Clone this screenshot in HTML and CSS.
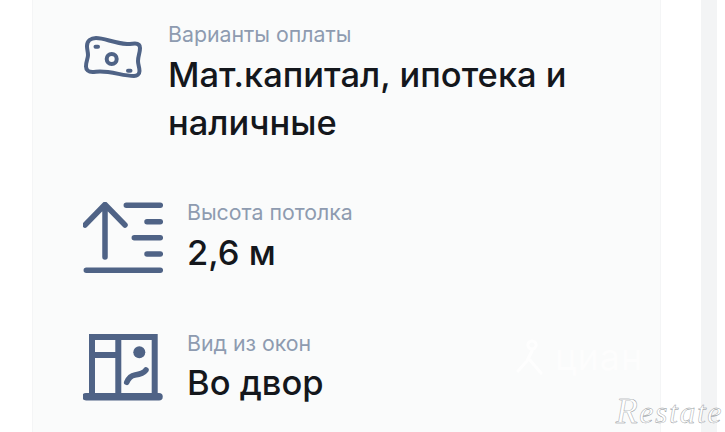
FILE: index.html
```html
<!DOCTYPE html>
<html lang="ru">
<head>
<meta charset="utf-8">
<title>Параметры</title>
<link rel="stylesheet" href="styles.css">
</head>
<body>
<div class="page">
  <section class="card">
    <div class="row row-pay">
      <svg class="icon icon-pay" viewBox="0 0 60 46" fill="none" stroke="#4f6386" stroke-width="4" stroke-linecap="round" stroke-linejoin="round">
        <path d="M4 11C4 6 8 3 13 3C22 3 30 8 44 9C47 9.200 50 8.500 52 8.500C55 8.500 57 10 57 13C57 18 55 21 55 26C55 30 56.500 32 56.500 36C56.500 39.500 54 41 51 41C40 41 30 36.500 17 36.500C14 36.500 12 37 9.500 37C5.500 37 3 35 3 31.500C3 26 5 24 5 20C5 16.500 4 15 4 11Z"/>
        <circle cx="28.700" cy="24" r="5"/>
        <path d="M12.500 11.700H15M45 35.700H47.500"/>
      </svg>
      <div class="text">
        <div class="label">Варианты оплаты</div>
        <div class="value">Мат.капитал, ипотека и наличные</div>
      </div>
    </div>
    <div class="row row-height">
      <svg class="icon icon-wide" viewBox="0 0 80 72" fill="none" stroke="#4f6386" stroke-width="5.500" stroke-linecap="round" stroke-linejoin="round">
        <path d="M2 23L22 2.500L42 23M22 2.500V55"/>
        <path d="M43.300 3.300H77.300M64 19.700H77.300M51.300 35.700H77.300M64 52H77.300M3.300 68.300H77.300"/>
      </svg>
      <div class="text">
        <div class="label">Высота потолка</div>
        <div class="value">2,6 м</div>
      </div>
    </div>
    <div class="row row-view">
      <svg class="icon icon-wide icon-window" viewBox="0 0 80 72" fill="none" stroke="#4f6386" stroke-linecap="round" stroke-linejoin="round">
        <path d="M9 62V3H71.700V62M35.300 3V62M9 21H35.300" stroke-width="6" stroke-linecap="butt" stroke-linejoin="miter"/>
        <path d="M3 62.700H76" stroke-width="7.500"/>
        <circle cx="56.300" cy="18.300" r="6" fill="#4f6386" stroke="none"/>
        <path d="M43.700 48.300C46 43 49 41.500 52 41C56 40.500 60 40 63 36" stroke-width="5.500"/>
      </svg>
      <div class="text">
        <div class="label">Вид из окон</div>
        <div class="value">Во двор</div>
      </div>
    </div>
    <div class="ghost">
      <svg class="ghost-logo" viewBox="0 0 30 40" fill="none" stroke="#fefefe" stroke-width="3" stroke-linecap="round">
        <circle cx="17" cy="6" r="4"/>
        <path d="M17 12L12 22L3 32M14 20L26 34"/>
      </svg>
      <span>циан</span>
    </div>
  </section>
  <aside class="side"></aside>
  <div class="mark"><span class="mark-r">R</span>estate</div>
</div>
</body>
</html>
```

FILE: styles.css
```css
html, body {
  margin: 0;
  height: 100%;
  background: #fff;
  overflow: hidden;
}
.page {
  width: 725px;
  height: 432px;
  display: flex;
  overflow: hidden;
  position: relative;
  font-family: Inter, "Noto Sans", sans-serif;
}
.card {
  box-sizing: border-box;
  width: 629px;
  height: 432px;
  margin-left: 32px;
  padding: 21px 0 0 50px;
  background: #fafbfb;
  border: solid #f4f5f6;
  border-width: 0 1px 0 1px;
  position: relative;
  flex: none;
}
.row {
  display: flex;
  align-items: flex-start;
}
.row-height {
  margin-top: 52px;
}
.row-view {
  margin-top: 53px;
}
.icon {
  flex: none;
  display: block;
}
.icon-pay {
  width: 60px;
  height: 46px;
  margin: 14px 25px 0 0;
}
.icon-wide {
  width: 80px;
  height: 72px;
  margin: 3px 24px 0 0;
}
.row-view .icon-window {
  margin-top: 4px;
}
.label {
  font-size: 21.300px;
  line-height: 26px;
  color: #8e9bb0;
}
.value {
  font-size: 34.500px;
  font-weight: 500;
  line-height: 48px;
  color: #14171c;
  margin-top: 4px;
  width: 430px;
}
.row-view .value {
  margin-top: 3px;
}
.ghost {
  position: absolute;
  left: 482px;
  top: 335px;
  display: flex;
  align-items: flex-end;
  gap: 10px;
  font-size: 36px;
  line-height: 44px;
  color: #fdfdfd;
  letter-spacing: 1px;
}
.ghost-logo {
  width: 30px;
  height: 40px;
  display: block;
}
.side {
  width: 16px;
  height: 432px;
  margin-left: 40px;
  background: #f3f4f5;
  flex: none;
}
.mark {
  position: absolute;
  right: 2px;
  top: 393px;
  font-family: "Liberation Serif", serif;
  font-style: italic;
  font-size: 32px;
  line-height: 38px;
  letter-spacing: 1.500px;
  color: #fff;
  -webkit-text-stroke: 0.4px #8a8f94;
}
.mark-r {
  font-size: 36px;
  line-height: 30px;
}
```
